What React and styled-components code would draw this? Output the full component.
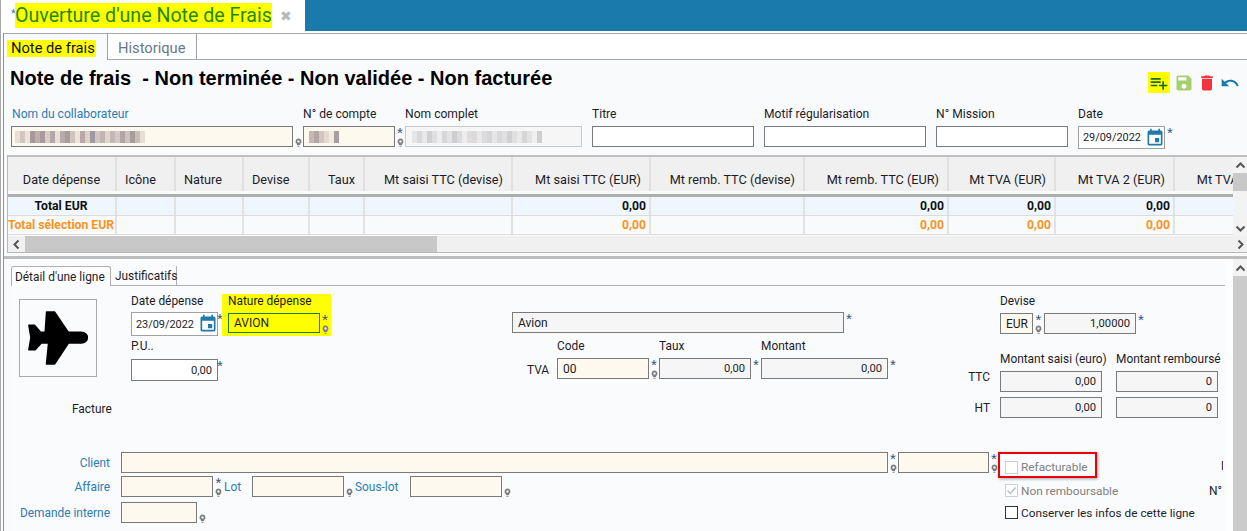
import React from "react";
import styled, { createGlobalStyle } from "styled-components";

const Global = createGlobalStyle`
  html, body { margin: 0; padding: 0; background: #fff; overflow: hidden; }
  body { font-family: "Open Sans", "Noto Sans", sans-serif; font-size: 12px; color: #1c1c28; }
  * { box-sizing: border-box; }
`;

const Page = styled.div`
  position: relative;
  width: 1247px; height: 531px; overflow: hidden;
  border-left: 1px solid #a8a8a8;
  display: flex; flex-direction: column; background: #fff;
`;
const DocBar = styled.div`display: flex; height: 31px; flex: none; background: #1a7aab;`;
const DocTab = styled.div`
  width: 304px; background: #fff; display: flex; align-items: center; padding: 0 0 0 10px; white-space: nowrap;
  font-family: Roboto, sans-serif; font-size: 19.6px; color: #2b86b8;
`;
const DocStar = styled.span`width: 4px; flex: none; font-size: 11px; line-height: 11px; margin-top: -4px; overflow: visible;`;
const DocTitle = styled.span`background: #ffff00; color: #1f8a0c; height: 25px; line-height: 25px; width: 257px; flex: none;`;
const DocClose = styled.span`margin-left: 8px; color: #b8b8b8; font-family: "DejaVu Sans", sans-serif; font-size: 14px; font-weight: 700; margin-top: 1px;`;
const Panel = styled.div`
  margin: 2px 0 0 2px; flex: 1; min-height: 0; display: flex; flex-direction: column;
  border-left: 1px solid #8f8f8f; background: #f9fafc;
`;
const MainTabs = styled.div`
  height: 27px; flex: none; display: flex; background: #fff;
  border-top: 1px solid #a8a8a8; border-bottom: 1px solid #a8a8a8;
`;
const MainTab = styled.div`
  width: ${p => p.$w}px; height: ${p => p.$active ? 26 : 25}px; padding: 5px 0 0 ${p => p.$pl}px;
  line-height: 18px; white-space: nowrap;
  color: ${p => p.$active ? "#111" : "#66788a"}; background: ${p => p.$active ? "#f9fafc" : "#fff"};
  border-right: 1px solid #a0a0a0; font-family: Roboto, sans-serif; font-size: 14.7px;
`;
const Marked = styled.span`background: #ffff00; display: inline-block; width: 89px; height: 17px; line-height: 17px; margin-left: -4px; padding-left: 4px;`;
const TitleRow = styled.div`height: 46px; flex: none; display: flex; justify-content: space-between;`;
const Title = styled.h1`
  margin: 7px 0 0 6px; font: 700 20px/22px "Liberation Sans", Arial, sans-serif; color: #000; white-space: pre;
`;
const Tools = styled.div`display: flex; gap: 1px; margin: 12px 6px 0 0; height: 21px; align-items: center;`;
const ToolBtn = styled.span`
  display: flex; align-items: center; justify-content: center; width: 22px; height: 21px;
  background: ${p => p.$on ? "#ffff00" : "transparent"};
  margin-right: ${p => p.$on ? 2 : 0}px;
`;
const HeaderFields = styled.div`display: flex; padding-left: 7px; height: 49px; flex: none;`;
const Col = styled.div`width: ${p => p.$w}px; flex: none;`;
const Lab = styled.div`
  height: 16px; line-height: 16px; font-family: Roboto, sans-serif; font-size: 12.1px; white-space: nowrap;
  color: ${p => p.$link ? "#2b7cb3" : "#1c1c28"};
  text-align: ${p => p.$right ? "right" : "left"};
  margin-bottom: ${p => p.$mb ?? 4}px;
  margin-top: ${p => p.$mt ?? 0}px;
  padding-left: ${p => p.$pl ?? 0}px;
`;
const DetailLab = styled(Lab)`font-size: 11.9px;`;
const Ctl = styled.div`display: flex; align-items: flex-start; margin-top: ${p => p.$mt ?? 0}px; padding-left: ${p => p.$pl ?? 0}px;`;
const Inp = styled.div`
  width: ${p => p.$w}px; height: ${p => p.$h ?? 21}px; flex: none;
  border: 1px solid ${p => p.$line === "thin" ? "#c9c9c9" : p.$line === "soft" ? "#a0a0a0" : p.$line === "green" ? "#1d7d22" : "#7a7a7a"};
  background: ${p => p.$bg === "cream" ? "#fdf9ee" : p.$bg === "gray" ? "#f6f6f6" : p.$bg === "none" ? "transparent" : "#fff"};
  display: flex; align-items: center; justify-content: ${p => p.$right ? "flex-end" : "flex-start"};
  padding: 0 ${p => p.$num ? 4 : 5}px; font-family: Roboto, sans-serif; font-size: ${p => p.$num ? 10.9 : p.$right ? 11.2 : 12}px; color: #1c1c28; white-space: nowrap; overflow: hidden;
`;
const MarkBox = styled.span`
  width: ${p => p.$w ?? 10}px; flex: none; display: flex; flex-direction: column; align-items: center; height: 21px; padding-top: 1px;
`;
const Star = styled.span`font: 15px/11px "Liberation Sans", sans-serif; height: 9px; color: #34527f;`;
const BulbSvg = styled.svg`width: 7px; height: 9px; margin-top: 2px; flex: none;`;
const Bulb = () => (
  <BulbSvg viewBox="0 0 7 9"><path d="M3.5.5a3 3 0 0 0-1.6 5.5v1h3.2V6A3 3 0 0 0 3.5.5zM2.5 7.8h2V8.8h-2z" fill="#7d7d7d" /><circle cx="3.5" cy="3.5" r="1.2" fill="#eee" /></BulbSvg>
);
const Mark = ({ star, bulb, w }) => (
  <MarkBox $w={w}>
    {star ? <Star>*</Star> : <Star />}
    {bulb && <Bulb />}
  </MarkBox>
);
const Mosaic = styled.div`display: flex; height: 12px; flex: none; filter: blur(0.6px); margin-left: ${p => p.$ml}px;`;
const Tile = styled.i`display: block; width: 5px; height: 100%;`;
const Blur = ({ colors, ml }) => (
  <Mosaic $ml={ml}>{colors.map((c, i) => <Tile key={i} style={{ background: c }} />)}</Mosaic>
);
const nameTiles = ["#eaddd4","#d5c5c1","#ece3da","#a8989c","#bdb0ac","#a99aa0","#d9cdc8","#b5a8a8","#eadfd6","#b8aaaa","#a89c9c","#cfc4bf","#ece3da","#b8a8a8","#dcd2c8","#a098a4","#d1c5c2","#c2b4b4","#e1d5cc","#c5b7b7","#d6c9c5","#b2a5a5","#cdc2bf","#a89c9c","#c9bdb8","#e8ded6"];
const acctTiles = ["#c8b8b4","#b5a6a6","#d3c5c0","#e4dacf","#f2ebdd","#a89da0"];
const fullTiles = ["#e6e6e8","#d8d8dc","#e8e8e9","#cfcfd4","#dfdfe2","#ededee","#d8d6d8","#e3e3e5","#cfcdd0","#dcdcdc","#ededee","#e0dcdc","#dbdbdb","#e9e9ea","#dcdcdf","#d6d6da","#e6e6e6","#d9d9dc","#e0e0e2","#cfcfd4","#dfdfe2","#e9e9e9","#d6d6d6","#e3e3e5","#efefef","#cfcfd0"];

const TableFrame = styled.div`
  margin-left: 3px; height: 98px; flex: none; display: flex; flex-direction: column;
  border-top: 2px solid #c0c0c0; border-left: 1px solid #b8b8b8; border-bottom: 1px solid #b8b8b8;
`;
const TableMain = styled.div`display: flex; height: 79px; flex: none;`;
const TableClip = styled.div`width: 1225px; overflow: hidden; flex: none;`;
const Rows = styled.div`width: 1400px;`;
const cols = "109px 59px 68px 66px 55px 148px 138px 154px 144px 107px 119px 119px";
const HeadRow = styled.div`
  display: grid; grid-template-columns: ${cols}; height: 37px; background: #f0f0f0; border-bottom: 3px solid #f9fafc;
`;
const HeadCell = styled.div`
  display: flex; align-items: flex-end; padding: 0 8px 4px 8px; justify-content: ${p => p.$a === "r" ? "flex-end" : p.$a === "c" ? "center" : "flex-start"};
  font-family: Roboto, sans-serif; font-size: 12.7px; color: #1c1c28; white-space: nowrap; height: 34px;
  border-right: 2px solid #e0e0e0; overflow: hidden;
`;
const Bar = styled.div`height: 3px; background: #aeaeae;`;
const DataRow = styled.div`
  display: grid; grid-template-columns: ${cols}; height: 19px;
  background: ${p => p.$sel ? "#f9fafc" : "#eff6fd"}; border-bottom: 1px solid #dcdcdc;
`;
const DataCell = styled.div`
  border-right: 2px solid #e2e2e2; padding: 0 3px 0 2px; display: flex; align-items: center; justify-content: ${p => p.$c ? "center" : "flex-end"};
  font-family: Roboto, sans-serif; font-weight: 700; font-size: 12.2px; white-space: nowrap; overflow: hidden;
  color: ${p => p.$sel ? "#f7941e" : "#111"};
`;
const VBar = styled.div`
  width: 14px; flex: none; background: #f3f3f3; display: flex; flex-direction: column; align-items: center;
`;
const Thumb = styled.div`width: 14px; height: 18px; background: #c8c8c8; flex: none;`;
const HBar = styled.div`height: 16px; flex: none; display: flex; align-items: stretch; background: #f0f0f0;`;
const HThumb = styled.div`width: 412px; background: #c8c8c8;`;
const HArrow = styled.span`width: ${p => p.$w}px; flex: none; display: flex; align-items: center; justify-content: center; margin-left: ${p => p.$end ? "auto" : "0"};`;
const VArrow = styled.span`width: 14px; height: 16px; flex: none; display: flex; align-items: center; justify-content: center; margin-top: ${p => p.$end ? "auto" : "0"};`;
const Chevron = ({ d }) => (
  <svg width="11" height="11" viewBox="0 0 11 11"><path d={d} fill="none" stroke="#555" strokeWidth="2" /></svg>
);

const Splitter = styled.div`height: 3px; flex: none; margin-top: 3px; background: #bdbdbd;`;
const Lower = styled.div`flex: 1; min-height: 0; display: flex;`;
const Detail = styled.div`
  width: 1214px; margin-left: 7px; flex: none; overflow: hidden; display: flex; flex-direction: column; background: #fafbfd;
`;
const SideGap = styled.div`width: 8px; flex: none; background: #fdfdfe;`;
const SideBar = styled.div`flex: 1; background: #f3f3f3; display: flex; flex-direction: column; padding-top: 1px;`;
const SideThumb = styled.div`flex: 1; background: #cbcbcb;`;
const SubTabs = styled.div`
  margin-top: 7px; height: 20px; flex: none; display: flex; border-bottom: 1px solid #b0b0b0;
`;
const SubTab = styled.div`
  font-family: Roboto, sans-serif; font-size: 11.9px; line-height: 19px; height: ${p => p.$active ? 20 : 19}px; padding: 1px 0 0 ${p => p.$pl}px; width: ${p => p.$w}px;
  border-right: 1px solid #b0b0b0; color: #1c1c28; white-space: nowrap;
  ${p => p.$active ? "border: 1px solid #b0b0b0; border-bottom: none; border-radius: 3px 3px 0 0; background:#fff;" : ""}
`;
const TopBand = styled.div`display: flex; padding: 7px 0 0 8px; height: 133px; flex: none;`;
const PlaneBox = styled.div`
  width: 78px; height: 78px; margin-top: 6px; border: 1px solid #a9a9a9; display: flex; align-items: center; justify-content: center; background: #fafbfd;
`;
const FactureLab = styled(DetailLab)`margin-top: 24px; padding-left: 53px;`;
const Highlight = styled.div`
  width: 109px; height: 42px; margin-top: 1px; padding-left: 6px; background: #ffff00;
`;
const HiLab = styled(DetailLab)`height: 14px; line-height: 14px; margin-bottom: 5px;`;
const TvaGrid = styled.div`
  display: grid; grid-template-columns: 45px 92px 10px 92px 10px 127px 10px; margin-top: 5px; row-gap: 4px;
`;
const TvaLab = styled(DetailLab)`margin: 0; align-self: center; padding-left: 15px; padding-top: 1px;`;
const MoneyGrid = styled.div`
  display: grid; grid-template-columns: 30px 10px 102px 14px 102px; margin-top: 17px; row-gap: 5px;
`;
const TtcLab = styled(DetailLab)`margin: -2px 0 0; text-align: right;`;
const HtLab = styled(DetailLab)`margin: 0; align-self: center; text-align: right;`;
const BottomBand = styled.div`display: flex; padding: 33px 0 0 8px;`;
const LeftRows = styled.div`width: 979px; flex: none; display: flex; flex-direction: column;`;
const FormRow = styled.div`display: flex; align-items: flex-start; height: ${p => p.$h}px;`;
const RowLab = styled(DetailLab)`width: 91px; flex: none; margin: 3px 11px 0 0; text-align: right;`;
const InlineLab = styled(DetailLab)`margin: 3px 0 0 0; width: ${p => p.$w}px; flex: none;`;
const RightChecks = styled.div`width: 225px; flex: none; display: flex; flex-direction: column;`;
const CheckLine = styled.div`display: flex; align-items: center; height: ${p => p.$h}px; padding-left: 7px; width: 100%;`;
const RedBox = styled.div`
  display: flex; align-items: center; padding: 4px 0 0 5px; width: 99px; height: 26px; flex: none;
  border: 2px solid #e8000a; box-shadow: 1px 1px 3px rgba(0,0,0,.35); background: #fafbfd;
`;
const RedLine = styled.div`display: flex; align-items: flex-start; height: 26px; flex: none;`;
const Box = styled.span`
  width: 13px; height: 13px; flex: none; display: flex; align-items: center; justify-content: center; background: #fff;
  border: 1px solid ${p => p.$dark ? "#333" : "#cfcfcf"};
`;
const CheckText = styled.span`
  margin-left: 3px; font-family: Roboto, sans-serif; font-size: 11.8px; white-space: nowrap; color: ${p => p.$muted ? "#808080" : "#1c1c28"};
`;
const Clip = styled.span`
  margin-left: auto; width: ${p => p.$w}px; flex: none; overflow: hidden; white-space: nowrap; font-family: Roboto, sans-serif; font-size: 12px; color: #1c1c28;
`;
const ClipTop = styled(Clip)`margin-top: 7px;`;
const CalSvg = styled.svg`width: 20px; height: 20px; flex: none; margin: 0 -5px 0 auto;`;

const Calendar = () => (
  <CalSvg viewBox="0 0 24 24">
    <path fill="#1f7bab" d="M19 3h-1V1h-2v2H8V1H6v2H5c-1.11 0-1.99.9-1.99 2L3 19c0 1.1.89 2 2 2h14c1.1 0 2-.9 2-2V5c0-1.1-.9-2-2-2zm0 16H5V8h14v11zM12 12h5v5h-5z" />
  </CalSvg>
);

const heads = [
  ["Date dépense", "c"], ["Icône", "l"], ["Nature", "l"], ["Devise", "l"], ["Taux", "r"],
  ["Mt saisi TTC (devise)", "r"], ["Mt saisi TTC (EUR)", "r"], ["Mt remb. TTC (devise)", "r"], ["Mt remb. TTC (EUR)", "r"],
  ["Mt TVA (EUR)", "r"], ["Mt TVA 2 (EUR)", "r"], ["Mt TVA 3 (EUR)", "r"],
];
const amountCols = new Set([6, 8, 9, 10]);

const Row = ({ label, sel }) => (
  <DataRow $sel={sel}>
    {heads.map((h, i) => (
      <DataCell key={i} $c={i === 0} $sel={sel}>
        {i === 0 ? label : amountCols.has(i) ? "0,00" : ""}
      </DataCell>
    ))}
  </DataRow>
);

export default function App() {
  return (
    <Page>
      <Global />
      <DocBar>
        <DocTab><DocStar>*</DocStar><DocTitle>Ouverture d'une Note de Frais</DocTitle><DocClose>✖</DocClose></DocTab>
      </DocBar>
      <Panel>
        <MainTabs>
          <MainTab $w={104} $pl={7} $active><Marked>Note de frais</Marked></MainTab>
          <MainTab $w={89} $pl={10}>Historique</MainTab>
        </MainTabs>
        <TitleRow>
          <Title>Note de frais  - Non terminée - Non validée - Non facturée</Title>
          <Tools>
            <ToolBtn $on>
              <svg width="20" height="20" viewBox="0 0 24 24"><path fill="#1b6a10" d="M14 10H2v2h12v-2zm0-4H2v2h12V6zm4 8v-4h-2v4h-4v2h4v4h2v-4h4v-2h-4zM2 16h8v-2H2v2z" /></svg>
            </ToolBtn>
            <ToolBtn><svg width="20" height="20" viewBox="0 0 24 24"><path fill="#a6cf6c" d="M17 3H5c-1.11 0-2 .9-2 2v14c0 1.1.89 2 2 2h14c1.1 0 2-.9 2-2V7l-4-4zm-5 16c-1.66 0-3-1.34-3-3s1.34-3 3-3 3 1.34 3 3-1.34 3-3 3zm3-10H5V5h10v4z" /></svg></ToolBtn>
            <ToolBtn><svg width="20" height="20" viewBox="0 0 24 24"><path fill="#f5333f" d="M6 19c0 1.1.9 2 2 2h8c1.1 0 2-.9 2-2V7H6v12zM19 4h-3.5l-1-1h-5l-1 1H5v2h14V4z" /></svg></ToolBtn>
            <ToolBtn><svg width="20" height="20" viewBox="0 0 24 24"><path fill="#1a7aab" d="M12.5 8c-2.65 0-5.05.99-6.9 2.6L2 7v9h9l-3.62-3.62c1.39-1.16 3.16-1.88 5.12-1.88 3.54 0 6.55 2.31 7.6 5.5l2.37-.78C21.08 11.03 17.15 8 12.5 8z" /></svg></ToolBtn>
          </Tools>
        </TitleRow>
        <HeaderFields>
          <Col $w={292}>
            <Lab $link $pl={1}>Nom du collaborateur</Lab>
            <Ctl><Inp $w={282} $bg="cream"><Blur colors={nameTiles} ml={-2} /></Inp><Mark bulb /></Ctl>
          </Col>
          <Col $w={102}>
            <Lab>N° de compte</Lab>
            <Ctl><Inp $w={92} $bg="cream"><Blur colors={acctTiles} ml={0} /></Inp><Mark star bulb /></Ctl>
          </Col>
          <Col $w={187}>
            <Lab>Nom complet</Lab>
            <Ctl><Inp $w={177} $bg="gray" $line="thin"><Blur colors={fullTiles} ml={1} /></Inp></Ctl>
          </Col>
          <Col $w={172}><Lab>Titre</Lab><Ctl><Inp $w={162} /></Ctl></Col>
          <Col $w={172}><Lab>Motif régularisation</Lab><Ctl><Inp $w={162} /></Ctl></Col>
          <Col $w={142}><Lab>N° Mission</Lab><Ctl><Inp $w={132} /></Ctl></Col>
          <Col $w={100}>
            <Lab>Date</Lab>
            <Ctl><Inp $w={87} $h={23} $line="soft" $num>29/09/2022<Calendar /></Inp><Mark star /></Ctl>
          </Col>
        </HeaderFields>
        <TableFrame>
          <TableMain>
            <TableClip>
              <Rows>
                <HeadRow>{heads.map(([t, a]) => <HeadCell key={t} $a={a}>{t}</HeadCell>)}</HeadRow>
                <Bar />
                <Row label="Total EUR" />
                <Row label="Total sélection EUR" sel />
              </Rows>
            </TableClip>
            <VBar>
              <VArrow><Chevron d="M1.5 7.5 5.5 3.5 9.5 7.5" /></VArrow>
              <Thumb />
              <VArrow $end><Chevron d="M1.5 3.5 5.5 7.5 9.5 3.5" /></VArrow>
            </VBar>
          </TableMain>
          <HBar>
            <HArrow $w={17}><Chevron d="M7.5 1.5 3.5 5.5 7.5 9.5" /></HArrow>
            <HThumb />
            <HArrow $w={14} $end><Chevron d="M3.5 1.5 7.5 5.5 3.5 9.5" /></HArrow>
          </HBar>
        </TableFrame>
        <Splitter />
        <Lower>
          <Detail>
            <SubTabs>
              <SubTab $active $w={100} $pl={3}>Détail d'une ligne</SubTab>
              <SubTab $w={66} $pl={4}>Justificatifs</SubTab>
            </SubTabs>
            <TopBand>
              <Col $w={112}>
                <PlaneBox>
                  <svg width="60" height="54" viewBox="85 93 177 157">
                    <path fill="#000" stroke="#000" strokeWidth="5" strokeLinejoin="round" d="M88 134h16l18 21h14l4-60h23l41 60h38c12 0 18 8 18 15s-6 16-18 16h-38l-41 62h-23l6-62h-22l-18 20H88l6-36z" />
                  </svg>
                </PlaneBox>
                <FactureLab>Facture</FactureLab>
              </Col>
              <Col $w={91}>
                <DetailLab $mb={3}>Date dépense</DetailLab>
                <Ctl><Inp $w={87} $h={24} $line="soft" $num>23/09/2022<Calendar /></Inp><MarkBox $w={4}><Star>*</Star></MarkBox></Ctl>
                <DetailLab $mt={2} $mb={5}>P.U..</DetailLab>
                <Ctl><Inp $w={87} $h={22} $right>0,00</Inp><MarkBox $w={4}><Star>*</Star></MarkBox></Ctl>
              </Col>
              <Col $w={290}>
                <Highlight>
                  <HiLab>Nature dépense</HiLab>
                  <Ctl><Inp $w={92} $h={20} $line="green" $bg="none">AVION</Inp><Mark star bulb /></Ctl>
                </Highlight>
              </Col>
              <Col $w={448}>
                <Ctl $mt={19}><Inp $w={332} $bg="gray">Avion</Inp><Mark star /></Ctl>
                <TvaGrid>
                  <span />
                  <DetailLab $mb={0}>Code</DetailLab><span />
                  <DetailLab $mb={0}>Taux</DetailLab><span />
                  <DetailLab $mb={0}>Montant</DetailLab><span />
                  <TvaLab>TVA</TvaLab>
                  <Inp $w={92} $bg="cream">00</Inp><Mark star bulb />
                  <Inp $w={92} $bg="gray" $right>0,00</Inp><Mark star />
                  <Inp $w={127} $bg="gray" $right>0,00</Inp><Mark star />
                </TvaGrid>
              </Col>
              <Col $w={263}>
                <DetailLab $pl={40}>Devise</DetailLab>
                <Ctl $pl={40}>
                  <Inp $w={33} $bg="cream">EUR</Inp><Mark star bulb w={11} />
                  <Inp $w={92} $bg="gray" $right>1,00000</Inp><Mark star />
                </Ctl>
                <MoneyGrid>
                  <span /><span />
                  <DetailLab $mb={-1}>Montant saisi (euro)</DetailLab><span />
                  <DetailLab $mb={-1}>Montant remboursé</DetailLab>
                  <TtcLab>TTC</TtcLab><span />
                  <Inp $w={102} $bg="gray" $right>0,00</Inp><span />
                  <Inp $w={102} $bg="gray" $right>0</Inp>
                  <HtLab>HT</HtLab><span />
                  <Inp $w={102} $bg="gray" $right>0,00</Inp><span />
                  <Inp $w={102} $bg="gray" $right>0</Inp>
                </MoneyGrid>
              </Col>
            </TopBand>
            <BottomBand>
              <LeftRows>
                <FormRow $h={24}>
                  <RowLab $link>Client</RowLab>
                  <Inp $w={767} $bg="cream" /><Mark star bulb />
                  <Inp $w={91} $bg="cream" /><Mark star bulb />
                </FormRow>
                <FormRow $h={26}>
                  <RowLab $link>Affaire</RowLab>
                  <Inp $w={92} $bg="cream" /><Mark star bulb w={11} />
                  <InlineLab $link $w={28}>Lot</InlineLab>
                  <Inp $w={92} $bg="cream" /><Mark bulb w={11} />
                  <InlineLab $link $w={55}>Sous-lot</InlineLab>
                  <Inp $w={92} $bg="cream" /><Mark bulb w={11} />
                </FormRow>
                <FormRow $h={24}>
                  <RowLab $link>Demande interne</RowLab>
                  <Inp $w={76} $bg="cream" /><Mark bulb w={11} />
                </FormRow>
              </LeftRows>
              <RightChecks>
                <RedLine>
                  <RedBox><Box /><CheckText $muted>Refacturable</CheckText></RedBox>
                  <ClipTop $w={2}>N</ClipTop>
                </RedLine>
                <CheckLine $h={25}>
                  <Box><svg width="11" height="11" viewBox="0 0 11 11"><path d="M1.5 5.5 4.5 8.5 9.5 2.5" fill="none" stroke="#bdbdbd" strokeWidth="1.4" /></svg></Box>
                  <CheckText $muted>Non remboursable</CheckText>
                  <Clip $w={14}>N°</Clip>
                </CheckLine>
                <CheckLine $h={19}>
                  <Box $dark />
                  <CheckText>Conserver les infos de cette ligne</CheckText>
                </CheckLine>
              </RightChecks>
            </BottomBand>
          </Detail>
          <SideGap />
          <SideBar>
            <VArrow><Chevron d="M1.5 7.5 5.5 3.5 9.5 7.5" /></VArrow>
            <SideThumb />
          </SideBar>
        </Lower>
      </Panel>
    </Page>
  );
}
